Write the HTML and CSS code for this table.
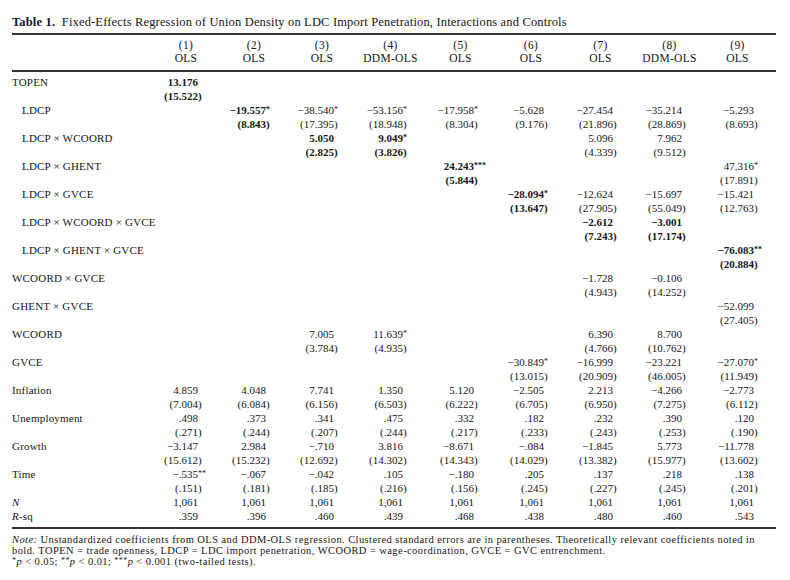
FILE: index.html
```html
<!DOCTYPE html>
<html>
<head>
<meta charset="utf-8">
<link rel="stylesheet" href="styles.css">
</head>
<body>
<div class="page">
<div class="title"><b>Table 1.</b>&nbsp; Fixed-Effects Regression of Union Density on LDC Import Penetration, Interactions and Controls</div>
<table class="reg">
<colgroup><col class="c0"><col class="c1"><col class="c2"><col class="c3"><col class="c4"><col class="c5"><col class="c6"><col class="c7"><col class="c8"><col class="c9"></colgroup>
<thead>
<tr><th></th><th>(1)<br>OLS</th><th>(2)<br>OLS</th><th>(3)<br>OLS</th><th>(4)<br>DDM-OLS</th><th>(5)<br>OLS</th><th>(6)<br>OLS</th><th>(7)<br>OLS</th><th>(8)<br>DDM-OLS</th><th class="last">(9)<br>OLS</th></tr>
</thead>
<tbody>
<tr class="first"><th>TOPEN</th><td class="b">13.176</td><td></td><td></td><td></td><td></td><td></td><td></td><td></td><td></td></tr>
<tr><th></th><td class="b">(15.522<i class="h">)</i></td><td></td><td></td><td></td><td></td><td></td><td></td><td></td><td></td></tr>

<tr><th class="in">LDCP</th><td></td><td class="b">−19.557<i class="h"><sup>*</sup></i></td><td>−38.540<i class="h"><sup>*</sup></i></td><td>−53.156<i class="h"><sup>*</sup></i></td><td>−17.958<i class="h"><sup>*</sup></i></td><td>−5.628</td><td>−27.454</td><td>−35.214</td><td>−5.293</td></tr>
<tr><th></th><td></td><td class="b">(8.843<i class="h">)</i></td><td>(17.395<i class="h">)</i></td><td>(18.948<i class="h">)</i></td><td>(8.304<i class="h">)</i></td><td>(9.176<i class="h">)</i></td><td>(21.896<i class="h">)</i></td><td>(28.869<i class="h">)</i></td><td>(8.693<i class="h">)</i></td></tr>

<tr><th class="in">LDCP × WCOORD</th><td></td><td></td><td class="b">5.050</td><td class="b">9.049<i class="h"><sup>*</sup></i></td><td></td><td></td><td>5.096</td><td>7.962</td><td></td></tr>
<tr><th></th><td></td><td></td><td class="b">(2.825<i class="h">)</i></td><td class="b">(3.826<i class="h">)</i></td><td></td><td></td><td>(4.339<i class="h">)</i></td><td>(9.512<i class="h">)</i></td><td></td></tr>

<tr><th class="in">LDCP × GHENT</th><td></td><td></td><td></td><td></td><td class="b">24.243<i class="h"><sup>***</sup></i></td><td></td><td></td><td></td><td>47.316<i class="h"><sup>*</sup></i></td></tr>
<tr><th></th><td></td><td></td><td></td><td></td><td class="b">(5.844<i class="h">)</i></td><td></td><td></td><td></td><td>(17.891<i class="h">)</i></td></tr>

<tr><th class="in">LDCP × GVCE</th><td></td><td></td><td></td><td></td><td></td><td class="b">−28.094<i class="h"><sup>*</sup></i></td><td>−12.624</td><td>−15.697</td><td>−15.421</td></tr>
<tr><th></th><td></td><td></td><td></td><td></td><td></td><td class="b">(13.647<i class="h">)</i></td><td>(27.905<i class="h">)</i></td><td>(55.049<i class="h">)</i></td><td>(12.763<i class="h">)</i></td></tr>

<tr><th class="in">LDCP × WCOORD × GVCE</th><td></td><td></td><td></td><td></td><td></td><td></td><td class="b">−2.612</td><td class="b">−3.001</td><td></td></tr>
<tr><th></th><td></td><td></td><td></td><td></td><td></td><td></td><td class="b">(7.243<i class="h">)</i></td><td class="b">(17.174<i class="h">)</i></td><td></td></tr>

<tr><th class="in">LDCP × GHENT × GVCE</th><td></td><td></td><td></td><td></td><td></td><td></td><td></td><td></td><td class="b">−76.083<i class="h"><sup>**</sup></i></td></tr>
<tr><th></th><td></td><td></td><td></td><td></td><td></td><td></td><td></td><td></td><td class="b">(20.884<i class="h">)</i></td></tr>

<tr><th>WCOORD × GVCE</th><td></td><td></td><td></td><td></td><td></td><td></td><td>−1.728</td><td>−0.106</td><td></td></tr>
<tr><th></th><td></td><td></td><td></td><td></td><td></td><td></td><td>(4.943<i class="h">)</i></td><td>(14.252<i class="h">)</i></td><td></td></tr>

<tr><th>GHENT × GVCE</th><td></td><td></td><td></td><td></td><td></td><td></td><td></td><td></td><td>−52.099</td></tr>
<tr><th></th><td></td><td></td><td></td><td></td><td></td><td></td><td></td><td></td><td>(27.405<i class="h">)</i></td></tr>

<tr><th>WCOORD</th><td></td><td></td><td>7.005</td><td>11.639<i class="h"><sup>*</sup></i></td><td></td><td></td><td>6.390</td><td>8.700</td><td></td></tr>
<tr><th></th><td></td><td></td><td>(3.784<i class="h">)</i></td><td>(4.935<i class="h">)</i></td><td></td><td></td><td>(4.766<i class="h">)</i></td><td>(10.762<i class="h">)</i></td><td></td></tr>

<tr><th>GVCE</th><td></td><td></td><td></td><td></td><td></td><td>−30.849<i class="h"><sup>*</sup></i></td><td>−16.999</td><td>−23.221</td><td>−27.070<i class="h"><sup>*</sup></i></td></tr>
<tr><th></th><td></td><td></td><td></td><td></td><td></td><td>(13.015<i class="h">)</i></td><td>(20.909<i class="h">)</i></td><td>(46.005<i class="h">)</i></td><td>(11.949<i class="h">)</i></td></tr>

<tr><th>Inflation</th><td>4.859</td><td>4.048</td><td>7.741</td><td>1.350</td><td>5.120</td><td>−2.505</td><td>2.213</td><td>−4.266</td><td>−2.773</td></tr>
<tr><th></th><td>(7.004<i class="h">)</i></td><td>(6.084<i class="h">)</i></td><td>(6.156<i class="h">)</i></td><td>(6.503<i class="h">)</i></td><td>(6.222<i class="h">)</i></td><td>(6.705<i class="h">)</i></td><td>(6.950<i class="h">)</i></td><td>(7.275<i class="h">)</i></td><td>(6.112<i class="h">)</i></td></tr>

<tr><th>Unemployment</th><td>.498</td><td>.373</td><td>.341</td><td>.475</td><td>.332</td><td>.182</td><td>.232</td><td>.390</td><td>.120</td></tr>
<tr><th></th><td>(.271<i class="h">)</i></td><td>(.244<i class="h">)</i></td><td>(.207<i class="h">)</i></td><td>(.244<i class="h">)</i></td><td>(.217<i class="h">)</i></td><td>(.233<i class="h">)</i></td><td>(.243<i class="h">)</i></td><td>(.253<i class="h">)</i></td><td>(.190<i class="h">)</i></td></tr>

<tr><th>Growth</th><td>−3.147</td><td>2.984</td><td>−.710</td><td>3.816</td><td>−8.671</td><td>−.084</td><td>−1.845</td><td>5.773</td><td>−11.778</td></tr>
<tr><th></th><td>(15.612<i class="h">)</i></td><td>(15.232<i class="h">)</i></td><td>(12.692<i class="h">)</i></td><td>(14.302<i class="h">)</i></td><td>(14.343<i class="h">)</i></td><td>(14.029<i class="h">)</i></td><td>(13.382<i class="h">)</i></td><td>(15.977<i class="h">)</i></td><td>(13.602<i class="h">)</i></td></tr>

<tr><th>Time</th><td>−.535<i class="h"><sup>**</sup></i></td><td>−.067</td><td>−.042</td><td>.105</td><td>−.180</td><td>.205</td><td>.137</td><td>.218</td><td>.138</td></tr>
<tr><th></th><td>(.151<i class="h">)</i></td><td>(.181<i class="h">)</i></td><td>(.185<i class="h">)</i></td><td>(.216<i class="h">)</i></td><td>(.156<i class="h">)</i></td><td>(.245<i class="h">)</i></td><td>(.227<i class="h">)</i></td><td>(.245<i class="h">)</i></td><td>(.201<i class="h">)</i></td></tr>

<tr><th><em>N</em></th><td>1,061</td><td>1,061</td><td>1,061</td><td>1,061</td><td>1,061</td><td>1,061</td><td>1,061</td><td>1,061</td><td>1,061</td></tr>
<tr class="lastrow"><th><em>R</em>-sq</th><td>.359</td><td>.396</td><td>.460</td><td>.439</td><td>.468</td><td>.438</td><td>.480</td><td>.460</td><td>.543</td></tr>
</tbody>
</table>
<div class="note"><em>Note:</em> Unstandardized coefficients from OLS and DDM-OLS regression. Clustered standard errors are in parentheses. Theoretically relevant coefficients noted in<br>bold. TOPEN = trade openness, LDCP = LDC import penetration, WCOORD = wage-coordination, GVCE = GVC entrenchment.<br><sup>*</sup><em>p</em> &lt; 0.05; <sup>**</sup><em>p</em> &lt; 0.01; <sup>***</sup><em>p</em> &lt; 0.001 (two-tailed tests).</div>
</div>
</body>
</html>
```
FILE: styles.css
```css
html, body {
  margin: 0;
  padding: 0;
  background: #ffffff;
}
body {
  font-family: "Liberation Serif", "Times New Roman", serif;
  color: #161616;
}
.page {
  width: 764px;
  padding: 14px 14px 0 12px;
}
.title {
  font-size: 12.5px;
  line-height: 16px;
  letter-spacing: 0.16px;
  white-space: nowrap;
  margin-bottom: 3px;
}
.title b {
  font-weight: bold;
}
.reg {
  width: 764px;
  table-layout: fixed;
  border-collapse: separate;
  border-spacing: 0;
  border-bottom: 2px solid #333;
}
.c0 { width: 140px; }
.c1 { width: 68px; }
.c2 { width: 68px; }
.c3 { width: 68px; }
.c4 { width: 69px; }
.c5 { width: 71px; }
.c6 { width: 70px; }
.c7 { width: 69px; }
.c8 { width: 69px; }
.c9 { width: 72px; }
.reg thead th {
  border-top: 2px solid #333;
  border-bottom: 2px solid #333;
  font-weight: normal;
  font-size: 11.5px;
  letter-spacing: 0.3px;
  line-height: 13px;
  padding: 4px 0 5px 0;
  text-align: center;
}
.reg thead th.last {
  padding-right: 5px;
}
.reg tbody th {
  font-weight: normal;
  text-align: left;
  font-size: 11px;
  letter-spacing: 0.2px;
  line-height: 14px;
  height: 14px;
  padding: 0;
  white-space: nowrap;
}
.reg tbody th.in {
  padding-left: 10px;
}
.reg tbody td {
  font-size: 11px;
  line-height: 14px;
  height: 14px;
  padding: 0 22px 0 0;
  text-align: right;
  white-space: nowrap;
}
.reg tbody tr.first th,
.reg tbody tr.first td {
  padding-top: 3px;
}
.reg tbody tr.lastrow th,
.reg tbody tr.lastrow td {
  padding-bottom: 4px;
}
.reg td.b {
  font-weight: bold;
}
.h {
  display: inline-block;
  width: 0;
  font-style: normal;
  text-align: left;
}
.h sup, .note sup {
  font-size: 8px;
  line-height: 0;
  vertical-align: 2px;
}
.note {
  font-size: 10.5px;
  line-height: 11px;
  letter-spacing: 0.42px;
  padding-top: 5px;
  white-space: nowrap;
}
```
